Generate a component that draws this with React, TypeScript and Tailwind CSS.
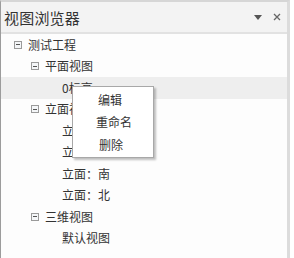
const font = { fontFamily: '"Noto Sans CJK SC", "Noto Sans", sans-serif' };

type Node = { label: string; level: number; toggle?: boolean; active?: boolean };

const rows: Node[] = [
  { label: "测试工程", level: 0, toggle: true },
  { label: "平面视图", level: 1, toggle: true },
  { label: "0标高", level: 2, active: true },
  { label: "立面视图", level: 1, toggle: true },
  { label: "立面：东", level: 2 },
  { label: "立面：西", level: 2 },
  { label: "立面：南", level: 2 },
  { label: "立面：北", level: 2 },
  { label: "三维视图", level: 1, toggle: true },
  { label: "默认视图", level: 2 },
];

function Toggle() {
  return (
    <span className="w-[8px] h-[8px] border border-[#9a9a9a] bg-[#f4f6f8] flex items-center justify-center mr-[6px]">
      <span className="w-[4px] h-px bg-[#555]" />
    </span>
  );
}

const indent = ["pl-[13px]", "pl-[30px]", "pl-[61px]"];

export default function App() {
  return (
    <div className="w-[294px] h-[258px] bg-white relative overflow-hidden" style={font}>
      <div className="w-[290px] h-full border-t-2 border-t-[#d6d6d6] border-l border-l-[#9c9c9c] border-r-[3px] border-r-[#dcdcdc] bg-[#fdfdfd] flex flex-col">
        {/* header */}
        <div className="h-[32px] bg-[#f3f3f3] border-b-2 border-b-[#e2e2e2] flex items-center pl-[3px] pr-[6px]">
          <span className="text-[15px] text-[#333] leading-none tracking-[0.2px]">视图浏览器</span>
          <div className="ml-auto flex items-center gap-[11px]">
            <svg width="8" height="5" viewBox="0 0 8 5">
              <path d="M0 0h8L4 5z" fill="#555" />
            </svg>
            <svg width="8" height="8" viewBox="0 0 8 8">
              <path d="M1 1l6 6M7 1L1 7" stroke="#666" strokeWidth="1.3" />
            </svg>
          </div>
        </div>
        {/* tree */}
        <div className="flex flex-col">
          {rows.map((r, i) => (
            <div
              key={i}
              className={`h-[21.5px] flex items-center text-[12px] text-[#333] ${indent[r.level]} ${r.active ? "bg-[#eeeeee]" : ""}`}
            >
              {r.toggle && <Toggle />}
              <span className="leading-none">{r.label}</span>
            </div>
          ))}
        </div>
      </div>
      {/* context menu */}
      <div className="absolute left-[72px] top-[86px] w-[82px] h-[72px] bg-white border border-[#a8a8a8] shadow-[2px_2px_2px_rgba(0,0,0,0.25)] flex flex-col justify-center text-[12px] text-[#333]">
        <div className="h-[22.5px] flex items-center pl-[25px]">编辑</div>
        <div className="h-[22.5px] flex items-center pl-[23px]">重命名</div>
        <div className="h-[22.5px] flex items-center pl-[26px]">删除</div>
      </div>
    </div>
  );
}
